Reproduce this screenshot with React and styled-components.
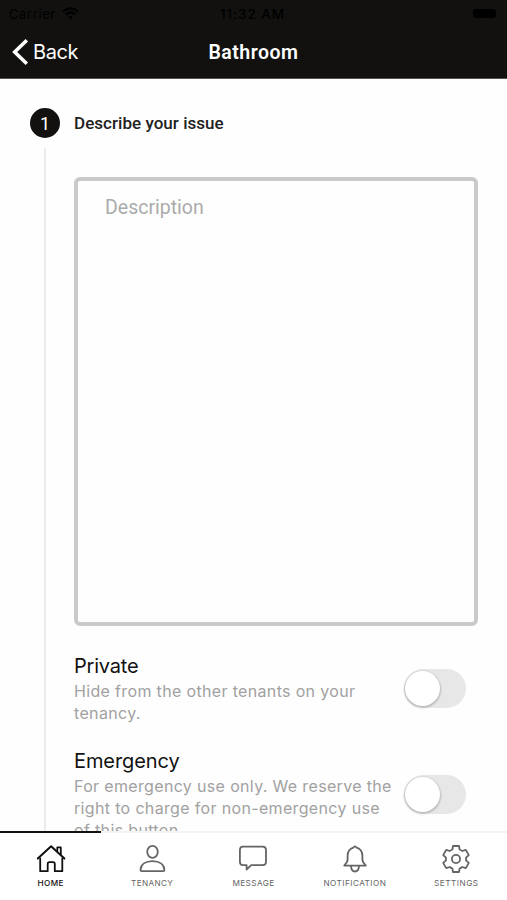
import React from 'react'
import styled, { createGlobalStyle } from 'styled-components'

const GlobalStyle = createGlobalStyle`
  * {
    box-sizing: border-box;
  }

  body {
    margin: 0;
    background: #fefefe;
    font-family: Inter, "Liberation Sans", sans-serif;
  }
`

const Screen = styled.div`
  height: 900px;
  display: flex;
  flex-direction: column;
  overflow: hidden;
`

const Header = styled.header`
  flex: none;
  height: 79px;
  background: #12110f;
  border-bottom: 1px solid #55544f;
`

const StatusBar = styled.div`
  height: 26px;
  padding: 1px 11px 0 9px;
  display: grid;
  grid-template-columns: 1fr auto 1fr;
  align-items: center;
  font-size: 13px;
  color: #000;
`

const Carrier = styled.div`
  display: flex;
  align-items: center;
  gap: 6px;
  letter-spacing: 0.6px;
`

const Clock = styled.span`
  font-weight: 500;
  font-size: 13.5px;
  letter-spacing: 0.9px;
`

const Battery = styled.span`
  justify-self: end;
  width: 23px;
  height: 9px;
  border-radius: 3px;
  background: #000;
`

const NavBar = styled.div`
  height: 53px;
  padding: 0 12px;
  display: grid;
  grid-template-columns: 1fr auto 1fr;
  align-items: center;
  color: #fff;
`

const BackButton = styled.button`
  display: flex;
  align-items: center;
  gap: 4px;
  padding: 0 0 1px;
  border: 0;
  background: none;
  color: inherit;
  font: 400 20px/24px Inter, sans-serif;
  letter-spacing: ${(props) => props.$spacing};
`

const Title = styled.h1`
  margin: 0;
  padding-top: 1px;
  font: 600 19.5px/24px Roboto, sans-serif;
  letter-spacing: 0.5px;
`

const Content = styled.main`
  flex: 1;
  min-height: 0;
  display: flex;
  gap: 14px;
  padding: 29px 29px 0 30px;
  overflow: hidden;
`

const StepRail = styled.div`
  width: 30px;
  display: flex;
  flex-direction: column;
  align-items: center;
  gap: 10px;
`

const StepNumber = styled.span`
  flex: none;
  width: 30px;
  height: 30px;
  border-radius: 50%;
  background: #12110f;
  color: #fff;
  text-align: center;
  font: 400 18px/31px Roboto, sans-serif;
`

const StepLine = styled.span`
  flex: 1;
  width: 2px;
  background: #ebebeb;
`

const StepBody = styled.div`
  flex: 1;
  min-width: 0;
`

const StepTitle = styled.h2`
  margin: 0 0 39px;
  font: 500 17px/30px Roboto, sans-serif;
  letter-spacing: 0.04px;
  color: #222;
`

const Description = styled.textarea`
  display: block;
  width: 404px;
  height: 449px;
  padding: 15px 27px;
  border: 4px solid #cacaca;
  border-radius: 6px;
  background: #fefefe;
  resize: none;
  outline: 0;
  font: 400 19.5px/24px Roboto, sans-serif;
  letter-spacing: 0;

  &::placeholder {
    color: #ababab;
  }
`

const Option = styled.div`
  display: flex;
  align-items: flex-start;
  justify-content: space-between;
  margin-top: ${(props) => props.$top}px;
  padding-right: 12px;
`

const OptionName = styled.div`
  padding-top: 1px;
  font-size: 20px;
  line-height: 27px;
  letter-spacing: ${(props) => props.$spacing}px;
  color: #111;
`

const OptionText = styled.div`
  font-size: 16px;
  line-height: 22px;
  letter-spacing: 0.34px;
  white-space: pre;
  color: #a1a1a1;
`

const Switch = styled.button`
  flex: none;
  width: 62px;
  height: 39px;
  margin-top: ${(props) => props.$top}px;
  padding: 1px;
  border: 0;
  border-radius: 20px;
  background: #e7e7e7;
`

const Thumb = styled.span`
  display: block;
  width: 35px;
  height: 35px;
  border-radius: 50%;
  background: #fff;
  box-shadow: 0 1px 2px 1px rgba(0, 0, 0, 0.2);
`

const TabBar = styled.nav`
  flex: none;
  height: 69px;
  display: grid;
  grid-template-columns: repeat(5, 1fr);
  background: #fff;
`

const Tab = styled.button`
  display: flex;
  flex-direction: column;
  align-items: center;
  gap: 3px;
  padding: 11px 0 0;
  border: 0;
  border-top: ${(props) => (props.$active ? '2px solid #12110f' : '2px solid #f3f3f3')};
  background: none;
  color: ${(props) => (props.$active ? '#111' : '#646464')};
`

const TabLabel = styled.span`
  font: ${(props) => (props.$active ? 500 : 400)} 8.2px/12px Inter, sans-serif;
  letter-spacing: ${(props) => props.$spacing}px;
  white-space: nowrap;
`

const TabIcon = ({ children }) => (
  <svg
    width="30"
    height="30"
    viewBox="0 0 30 30"
    fill="none"
    stroke="currentColor"
    strokeWidth="1.8"
    strokeLinecap="round"
    strokeLinejoin="round"
  >
    {children}
  </svg>
)

const tabs = [
  {
    label: 'HOME',
    spacing: 0.4,
    active: true,
    icon: (
      <>
        <path d="M4.2 14.5V27.2H11.7V20Q11.7 18.2 13.5 18.2H17Q18.8 18.2 18.8 20V27.2H26.3V14.5" />
        <path d="M1.8 14.6 15.1 2.2 28.4 14.6" strokeWidth="2" />
        <path d="M21.3 6.7V3.3H24.8V10.3" />
      </>
    ),
  },
  {
    label: 'TENANCY',
    spacing: 0.35,
    icon: (
      <>
        <ellipse cx="15.5" cy="7.8" rx="5.3" ry="6" />
        <path d="M4.7 27.2Q3.5 27.2 3.5 26C3.7 20.5 8.5 17.2 15.5 17.2S27.2 20.5 27.4 26Q27.4 27.2 26.2 27.2Z" />
      </>
    ),
  },
  {
    label: 'MESSAGE',
    spacing: 0.42,
    icon: (
      <path d="M5 2.7H24.5Q28 2.7 28 6.2V17.8Q28 21.2 24.5 21.2H13.2L8.6 25.5V21.2H5Q1.9 21.2 1.9 17.8V6.2Q1.9 2.7 5 2.7Z" />
    ),
  },
  {
    label: 'NOTIFICATION',
    spacing: 0.47,
    icon: (
      <>
        <path d="M13.3 3.7Q15 .9 16.7 3.7C21.4 5 22.3 8.5 22.4 12V15.8Q22.5 18.1 25.8 21.6H4.2Q7.5 18.1 7.6 15.8V12C7.7 8.5 8.6 5 13.3 3.7Z" />
        <path d="M11 21.8Q11.2 27.5 15 27.5T19 21.8" />
      </>
    ),
  },
  {
    label: 'SETTINGS',
    spacing: 0.5,
    icon: (
      <g transform="translate(15 15)">
        <path d="M-3-13H3L3.6-9.5Q4.9-9 6.3-8L9.8-9.1 12.8-3.9 10-1.4Q10.3 0 10 1.4L12.8 3.9 9.8 9.1 6.3 8Q4.9 9 3.6 9.5L3 13H-3L-3.6 9.5Q-4.9 9-6.3 8L-9.8 9.1-12.8 3.9-10 1.4Q-10.3 0-10-1.4L-12.8-3.9-9.8-9.1-6.3-8Q-4.9-9-3.6-9.5Z" />
        <circle r="4.1" />
      </g>
    ),
  },
]

export default function App() {
  return (
    <>
      <GlobalStyle />
      <Screen>
        <Header>
          <StatusBar>
            <Carrier>
              Carrier
              <svg width="17" height="13" viewBox="0 0 17 13" fill="none" stroke="#000" strokeWidth="2.2">
                <path d="M1 4.5Q8.5-1.7 16 4.5M3.8 7.5Q8.5 3.5 13.2 7.5" />
                <path d="M6 9.8Q8.5 7.8 11 9.8L8.5 12.3Z" fill="#000" stroke="none" />
              </svg>
            </Carrier>
            <Clock>11:32 AM</Clock>
            <Battery />
          </StatusBar>
          <NavBar>
            <BackButton $spacing="-0.4px">
              <svg width="17" height="26" viewBox="0 0 17 26" fill="none" stroke="#fff" strokeWidth="3.6">
                <path d="M14.8 1.3 2.7 13 14.8 24.7" />
              </svg>
              Back
            </BackButton>
            <Title>Bathroom</Title>
          </NavBar>
        </Header>
        <Content>
          <StepRail>
            <StepNumber>1</StepNumber>
            <StepLine />
          </StepRail>
          <StepBody>
            <StepTitle>Describe your issue</StepTitle>
            <Description placeholder="Description" />
            <Option $top={26}>
              <div>
                <OptionName $spacing={-0.2}>Private</OptionName>
                <OptionText>{'Hide from the other tenants on your\ntenancy.'}</OptionText>
              </div>
              <Switch $top={17}>
                <Thumb />
              </Switch>
            </Option>
            <Option $top={23}>
              <div>
                <OptionName $spacing={-0.1}>Emergency</OptionName>
                <OptionText>
                  {'For emergency use only. We reserve the\nright to charge for non-emergency use\nof this button.'}
                </OptionText>
              </div>
              <Switch $top={28}>
                <Thumb />
              </Switch>
            </Option>
          </StepBody>
        </Content>
        <TabBar>
          {tabs.map(({ label, spacing, active, icon }) => (
            <Tab key={label} $active={active}>
              <TabIcon>{icon}</TabIcon>
              <TabLabel $active={active} $spacing={spacing}>
                {label}
              </TabLabel>
            </Tab>
          ))}
        </TabBar>
      </Screen>
    </>
  )
}
